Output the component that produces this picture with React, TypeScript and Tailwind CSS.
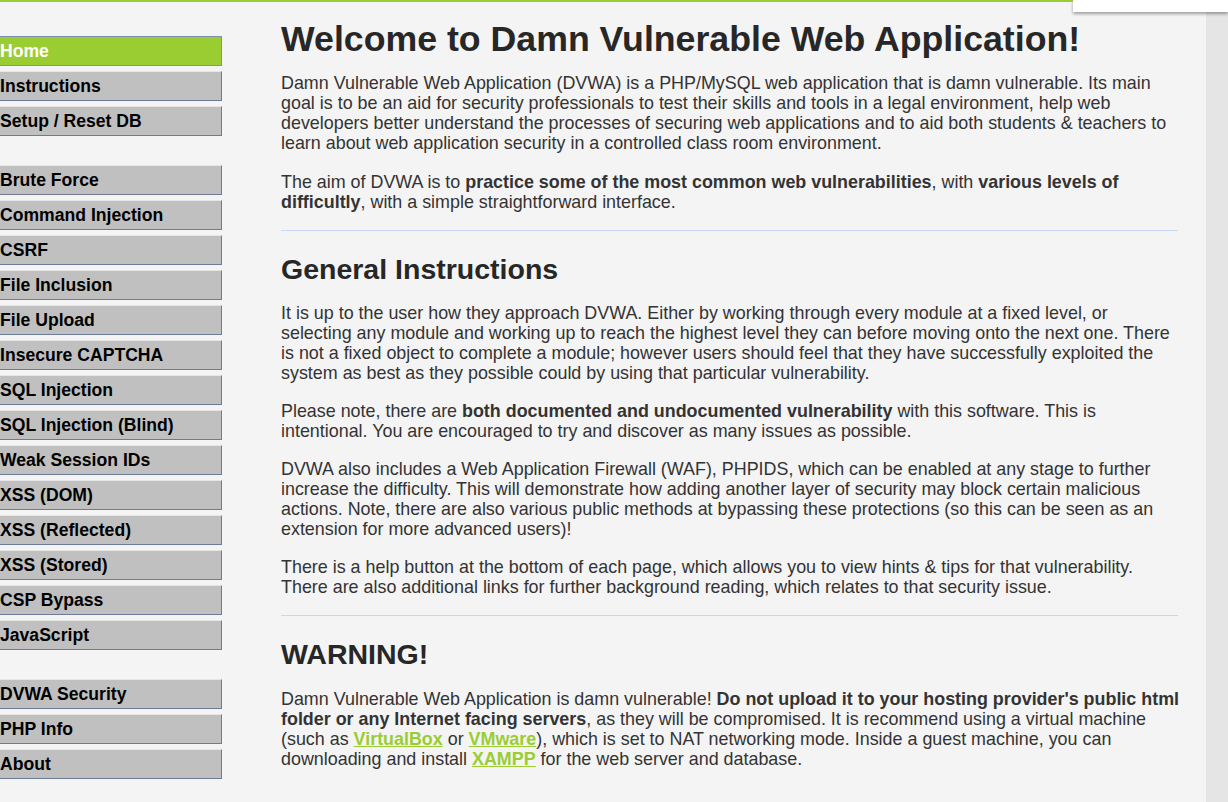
// DVWA welcome page

const menuGroups: string[][] = [
  ['Home', 'Instructions', 'Setup / Reset DB'],
  [
    'Brute Force',
    'Command Injection',
    'CSRF',
    'File Inclusion',
    'File Upload',
    'Insecure CAPTCHA',
    'SQL Injection',
    'SQL Injection (Blind)',
    'Weak Session IDs',
    'XSS (DOM)',
    'XSS (Reflected)',
    'XSS (Stored)',
    'CSP Bypass',
    'JavaScript',
  ],
  ['DVWA Security', 'PHP Info', 'About'],
];

function MenuItem({ label, selected }: { label: string; selected?: boolean }) {
  if (selected) {
    return (
      <li className="mb-[5px] h-[30px] border border-l-0 border-[#7f8fae] bg-[#9acd32] pt-[4px] text-[17.6px] font-bold leading-[20px] text-white">
        {label}
      </li>
    );
  }
  return (
    <li className="mb-[5px] h-[30px] border border-l-0 border-t-[#e6e6e6] border-r-[#6d7c96] border-b-[#6d7c96] bg-[#c0c0c0] pt-[4px] text-[17.6px] font-bold leading-[20px] text-black">
      {label}
    </li>
  );
}

function Link({ children }: { children: React.ReactNode }) {
  return <a className="font-bold text-[#9acd32] underline">{children}</a>;
}

export default function App() {
  return (
    <div className="relative min-h-[802px] bg-[#f4f4f4] font-['Liberation_Sans',Arial,sans-serif] text-[#333]">
      <div className="h-[2px] bg-[#9acd32]" />
      <div className="absolute right-0 top-0 h-[12px] w-[155px] bg-white shadow-[0_2px_3px_rgba(0,0,0,0.35)]" />

      <div className="flex min-h-[800px]">
        {/* side menu */}
        <div className="w-[222px] shrink-0 pt-[34px]">
          {menuGroups.map((group, gi) => (
            <ul key={gi} className="mb-[29px]">
              {group.map((item) => (
                <MenuItem key={item} label={item} selected={item === 'Home'} />
              ))}
            </ul>
          ))}
        </div>

        {/* main body */}
        <div className="ml-[59px] w-[899px] shrink-0 pt-[17px] text-[17.9px] leading-[20px]">
          <h1 className="mb-[13px] text-[35.7px] font-bold leading-[41px] text-[#272727]">
            Welcome to Damn Vulnerable Web Application!
          </h1>
          <p>
            Damn Vulnerable Web Application (DVWA) is a PHP/MySQL web application that is damn vulnerable. Its main
            goal is to be an aid for security professionals to test their skills and tools in a legal environment, help web
            developers better understand the processes of securing web applications and to aid both students &amp; teachers to
            learn about web application security in a controlled class room environment.
          </p>
          <p className="mt-[19px]">
            The aim of DVWA is to <b>practice some of the most common web vulnerabilities</b>, with <b>various levels of
            difficultly</b>, with a simple straightforward interface.
          </p>
          <hr className="mt-[18px] w-[897px] border-t border-[#c9d8f2]" />

          <h2 className="mt-[22px] text-[28.5px] font-bold leading-[33px] text-[#272727]">General Instructions</h2>
          <p className="mt-[17px]">
            It is up to the user how they approach DVWA. Either by working through every module at a fixed level, or
            selecting any module and working up to reach the highest level they can before moving onto the next one. There
            is not a fixed object to complete a module; however users should feel that they have successfully exploited the
            system as best as they possible could by using that particular vulnerability.
          </p>
          <p className="mt-[18px]">
            Please note, there are <b>both documented and undocumented vulnerability</b> with this software. This is
            intentional. You are encouraged to try and discover as many issues as possible.
          </p>
          <p className="mt-[18px]">
            DVWA also includes a Web Application Firewall (WAF), PHPIDS, which can be enabled at any stage to further
            increase the difficulty. This will demonstrate how adding another layer of security may block certain malicious
            actions. Note, there are also various public methods at bypassing these protections (so this can be seen as an
            extension for more advanced users)!
          </p>
          <p className="mt-[18px]">
            There is a help button at the bottom of each page, which allows you to view hints &amp; tips for that vulnerability.
            There are also additional links for further background reading, which relates to that security issue.
          </p>
          <hr className="mt-[18px] w-[897px] border-t border-[#c9d8f2]" />

          <h2 className="mt-[22px] text-[28.5px] font-bold leading-[33px] text-[#272727]">WARNING!</h2>
          <p className="mt-[18px]">
            Damn Vulnerable Web Application is damn vulnerable! <b>Do not upload it to your hosting provider's public html
            folder or any Internet facing servers</b>, as they will be compromised. It is recommend using a virtual machine
            (such as <Link>VirtualBox</Link> or <Link>VMware</Link>), which is set to NAT networking mode. Inside a guest machine, you can
            downloading and install <Link>XAMPP</Link> for the web server and database.
          </p>
        </div>

        <div className="flex-1" />
        <div className="w-[22px] shrink-0 bg-[#e5e5e5]" />
      </div>
    </div>
  );
}
